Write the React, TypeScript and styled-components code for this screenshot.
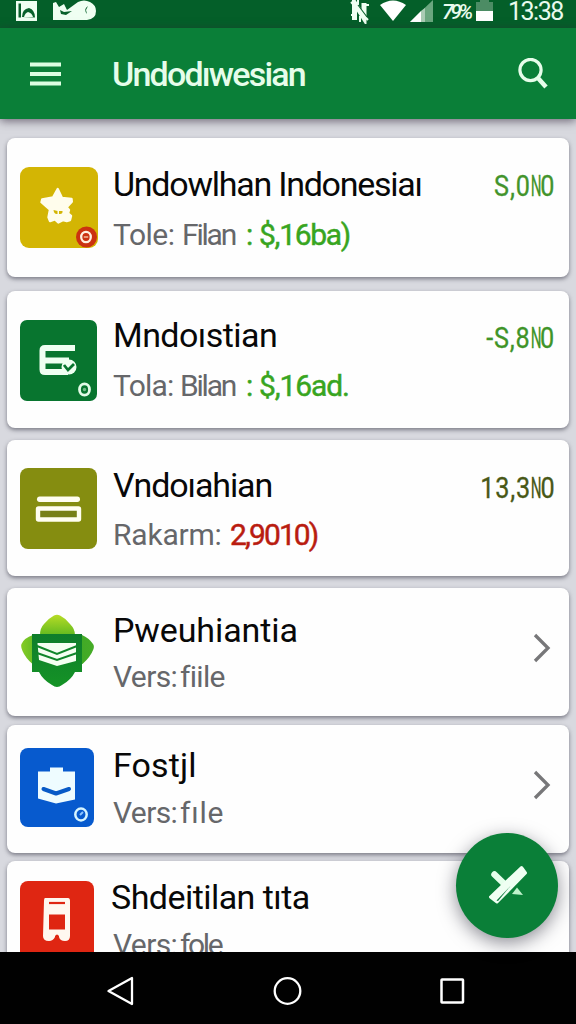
import React from 'react';
import styled, { createGlobalStyle } from 'styled-components';

const GlobalStyle = createGlobalStyle`
  * { box-sizing: border-box; }
  body { margin: 0; font-family: Roboto, 'Liberation Sans', sans-serif; background: #d8d9df; }
  svg { display: block; flex: none; }
`;

const Screen = styled.div`
  position: relative;
  width: 576px;
  height: 1024px;
  display: flex;
  flex-direction: column;
  overflow: hidden;
  background: #d8d9df;
`;

const StatusBar = styled.header`
  height: 28px;
  flex: none;
  display: flex;
  justify-content: space-between;
  background: #045f29;
  color: #e9fbee;
`;

const StatusGroup = styled.div<{ $side: 'left' | 'right' }>`
  display: flex;
  align-items: flex-start;
  padding-left: ${(p) => (p.$side === 'left' ? 16 : 0)}px;
  padding-right: ${(p) => (p.$side === 'right' ? 11 : 0)}px;
`;

const Percent = styled.span`
  font: italic 500 21px/24px Roboto, sans-serif;
  width: 34px;
  letter-spacing: -3.4px;
  white-space: nowrap;
`;

const Clock = styled.span`
  font-size: 25px;
  line-height: 24px;
  width: 57px;
  margin-left: 15px;
  letter-spacing: -1.5px;
  white-space: nowrap;
`;

const AppBar = styled.nav`
  position: relative;
  z-index: 1;
  height: 91px;
  flex: none;
  display: flex;
  align-items: center;
  padding: 0 27px 0 30px;
  background: #0a7f38;
  box-shadow: 0 2px 9px rgba(50, 40, 60, 0.65);
`;

const AppTitle = styled.h1`
  flex: 1;
  margin: 0 0 0 50px;
  font-size: 34px;
  line-height: 40px;
  font-weight: 500;
  letter-spacing: -1.8px;
  color: #e6fdea;
`;

const List = styled.main`
  flex: 1;
  min-height: 0;
  overflow: hidden;
  padding: 19px 7px 0;
`;

const Card = styled.article<{ $h: number; $gap: number }>`
  display: flex;
  height: ${(p) => p.$h}px;
  margin-bottom: ${(p) => p.$gap}px;
  padding: 0 16px 0 13px;
  border-radius: 8px;
  background: #fefefe;
  box-shadow: 0 2px 4px rgba(60, 60, 75, 0.6);
`;

const IconSlot = styled.div<{ $top: number }>`
  width: 93px;
  flex: none;
  padding-top: ${(p) => p.$top}px;
`;

const Copy = styled.div<{ $top: number }>`
  flex: 1;
  min-width: 0;
  padding-top: ${(p) => p.$top}px;
`;

const Title = styled.h2<{ $ls: number; $x: number }>`
  margin: 0 0 0 ${(p) => p.$x}px;
  font-size: 34px;
  line-height: 40px;
  font-weight: 400;
  letter-spacing: ${(p) => p.$ls}px;
  color: #080808;
  white-space: nowrap;
`;

const Detail = styled.p<{ $gap: number }>`
  display: flex;
  margin: ${(p) => p.$gap}px 0 0;
  font-size: 30px;
  line-height: 40px;
  color: #66676a;
  white-space: nowrap;
`;

const Part = styled.span<{ $w: number; $ls: number; $color?: string; $strong?: boolean }>`
  width: ${(p) => p.$w}px;
  letter-spacing: ${(p) => p.$ls}px;
  color: ${(p) => p.$color ?? 'inherit'};
  -webkit-text-stroke: ${(p) => (p.$strong ? 0.45 : 0)}px currentColor;
`;

const Amount = styled.span<{ $top: number; $color: string }>`
  padding-top: ${(p) => p.$top}px;
  margin-right: -2px;
  font-size: 29px;
  line-height: 36px;
  letter-spacing: 0.9px;
  color: ${(p) => p.$color};
  -webkit-text-stroke: 0.3px currentColor;
  white-space: nowrap;
  transform: scaleX(0.87);
  transform-origin: right;
`;

const NarrowGlyph = styled.span`
  display: inline-block;
  width: 11px;
  transform: scaleX(0.6);
  transform-origin: left;
`;

const ChevronSlot = styled.div<{ $top: number }>`
  padding: ${(p) => p.$top}px 2px 0 0;
`;

const NavBar = styled.footer`
  position: relative;
  height: 72px;
  flex: none;
  display: flex;
  align-items: center;
  padding: 6px 111px 0 105px;
  justify-content: space-between;
  background: #010101;
`;

const Fab = styled.button`
  position: absolute;
  left: 456px;
  top: 833px;
  width: 102px;
  height: 105px;
  padding: 0;
  border: 0;
  border-radius: 50%;
  background: #0a7f38;
  box-shadow: 0 5px 18px rgba(30, 30, 45, 0.5);
`;

const Chevron = () => (
  <svg width="18" height="30" viewBox="0 0 18 30" fill="none" stroke="#777779" strokeWidth="3.3">
    <path d="M2 2 15 15 2 28" />
  </svg>
);

const StarIcon = () => (
  <svg width="78" height="81" viewBox="0 0 78 81">
    <rect width="78" height="81" rx="9" fill="#d3b504" />
    <path
      d="M37.7 22 42 31 51.5 32 51.8 34.7 46.7 40.3 49 43 48 46.3 51 49 50 53 46.7 54 43.3 53 38.3 55.5 35 52.3 30 54 28.500 50.3 30 42.6 21.5 35.2 22.2 32.5 33 30.5Z"
      fill="#fffdec"
      stroke="#fffdec"
      strokeWidth="2.4"
      strokeLinejoin="round"
    />
    <path d="M33.5 43q.5 4.500 4 4v-3ZM39 44v3q4 .5 3.500-3Z" fill="#d3b504" />
    <circle cx="66.5" cy="70" r="10.5" fill="#cb3210" />
    <ellipse cx="66" cy="70" rx="4.8" ry="5.2" fill="none" stroke="#fff0df" strokeWidth="2.3" />
    <path d="M63.8 70h4.4" stroke="#f4c2a3" strokeWidth="1.4" />
  </svg>
);

const CardCheckIcon = () => (
  <svg width="77" height="81" viewBox="0 0 77 81">
    <rect width="77" height="81" rx="7" fill="#08752f" />
    <path d="M55 28H25q-2.500 0-2.500 2.500v19q0 2.500 2.500 2.500h23M25 40.500h24" fill="none" stroke="#effff2" strokeWidth="6" />
    <circle cx="49" cy="47" r="7.5" fill="#effff2" />
    <path d="m44 45 4 5 6-6" fill="none" stroke="#08752f" strokeWidth="2.8" />
    <ellipse cx="64.5" cy="69.5" rx="5" ry="5.7" fill="none" stroke="#e3fbe7" strokeWidth="2.8" />
    <circle cx="64.5" cy="69.5" r="1.7" fill="#74b887" />
  </svg>
);

const BarsIcon = () => (
  <svg width="77" height="81" viewBox="0 0 77 81">
    <rect width="77" height="81" rx="8" fill="#858d10" />
    <rect x="17" y="28.5" width="43" height="5.5" rx="2.7" fill="#fffef0" />
    <rect x="18" y="40.5" width="41" height="11" rx=".5" fill="#778016" stroke="#fffef0" strokeWidth="4.4" />
  </svg>
);

const LeafIcon = () => (
  <svg width="74" height="75" viewBox="0 0 74 75">
    <defs>
      <linearGradient id="leafTop" x1="0" x2="0" y1="0" y2="1">
        <stop stopColor="#b7dc26" />
        <stop offset="1" stopColor="#63ba20" />
      </linearGradient>
      <linearGradient id="leafSide" x1="0" x2="1" y1="0" y2="0">
        <stop stopColor="#85cc25" />
        <stop offset=".45" stopColor="#36a324" />
        <stop offset="1" stopColor="#46ac27" />
      </linearGradient>
      <linearGradient id="leafBody" x1="0" x2="0" y1="0" y2="1">
        <stop stopColor="#0e7d2b" />
        <stop offset="1" stopColor="#159326" />
      </linearGradient>
    </defs>
    <path d="M13 21Q4 24 1.500 30q-1 3 1 7 3 7 10 13h50q8-7 11-15 1-3-.5-5Q69 24 62 21Z" fill="url(#leafSide)" />
    <path d="M20 21q0-7 4-11 5-6 10-8.500 3-1.500 6 0 6 3 10 8.500 5 5 5 11Z" fill="url(#leafTop)" />
    <path d="M12 20h50v38h-7q-4 8-13 13-5 4-10 0-9-5-13-13h-7Z" fill="url(#leafBody)" />
    <path d="M17.500 29H56v18l-19 5-18-6Z" fill="#f5fff2" />
    <path d="m17 32 20 8 20-8M17 39l20 7 20-7" fill="none" stroke="#10862a" strokeWidth="2" />
  </svg>
);

const BriefcaseIcon = () => (
  <svg width="74" height="79" viewBox="0 0 74 79">
    <rect width="74" height="79" rx="8" fill="#075ace" />
    <path d="M18 23.5h12v-4h13v4h12v28l-19 4-18-5Z" fill="#eefcff" />
    <path d="m23.5 41 12.500 4.500 13-4.500" fill="none" stroke="#075ac7" strokeWidth="4" strokeLinecap="round" strokeLinejoin="round" />
    <ellipse cx="61" cy="66.5" rx="5.7" ry="6" fill="none" stroke="#d6f5ff" strokeWidth="2.5" />
    <path d="m60 67 3-3" stroke="#8dc5ff" strokeWidth="2" />
  </svg>
);

const TrainIcon = () => (
  <svg width="74" height="79" viewBox="0 0 74 79">
    <rect width="74" height="79" rx="8" fill="#df2612" />
    <path d="M25 17h23q2 0 2 3v35q0 5-5 5-5 0-6-4h-4q-2 4-6 4-6 0-6-5l1-35q0-3 1-3Z" fill="#fff8f0" />
    <path d="M29 22h16" stroke="#df2612" strokeWidth="2.2" />
    <path d="M29 33.5h16v15H29ZM35 60v-5q2-3 4 0v5Z" fill="#df2612" />
  </svg>
);

const green = '#38a51f';

interface Entry {
  icon: React.ReactNode;
  h: number;
  gap: number;
  iconTop: number;
  copyTop: number;
  lineGap: number;
  title: string;
  titleLs: number;
  titleX?: number;
  parts: { t: string; w: number; ls: number; color?: string; strong?: boolean }[];
  amount?: { lead: string; top: number; color: string };
  chevronTop?: number;
}

const entries: Entry[] = [
  {
    icon: <StarIcon />, h: 139, gap: 14, iconTop: 29, copyTop: 26, lineGap: 11,
    title: 'Undowlhan Indonesiaı', titleLs: -1.25,
    parts: [
      { t: 'Tole:', w: 69, ls: -0.5 },
      { t: 'Filan', w: 64, ls: -2.2 },
      { t: ':', w: 13, ls: 0, color: green, strong: true },
      { t: '$,16ba)', w: 95, ls: -1.3, color: green, strong: true },
    ],
    amount: { lead: 'S,0', top: 30, color: '#43942c' },
  },
  {
    icon: <CardCheckIcon />, h: 137, gap: 12, iconTop: 29, copyTop: 24, lineGap: 11,
    title: 'Mndoıstian', titleLs: -0.55,
    parts: [
      { t: 'Tola:', w: 67, ls: -0.8 },
      { t: 'Bilan', w: 66, ls: -2.2 },
      { t: ':', w: 13, ls: 0, color: green, strong: true },
      { t: '$,16ad.', w: 95, ls: -1.1, color: green, strong: true },
    ],
    amount: { lead: '-S,8', top: 29, color: '#3f9428' },
  },
  {
    icon: <BarsIcon />, h: 136, gap: 12, iconTop: 28, copyTop: 25, lineGap: 10,
    title: 'Vndoıahian', titleLs: -1.1,
    parts: [
      { t: 'Rakarm:', w: 117, ls: -0.2 },
      { t: '2,9010)', w: 95, ls: -1.9, color: '#b91c10', strong: true },
    ],
    amount: { lead: '13,3', top: 30, color: '#485816' },
  },
  {
    icon: <LeafIcon />, h: 128, gap: 9, iconTop: 26, copyTop: 22, lineGap: 7,
    title: 'Pweuhiantia', titleLs: -0.1,
    parts: [{ t: 'Vers:', w: 67, ls: -0.6 }, { t: 'fiile', w: 60, ls: -0.7 }],
    chevronTop: 45,
  },
  {
    icon: <BriefcaseIcon />, h: 128, gap: 8, iconTop: 23, copyTop: 20, lineGap: 8,
    title: 'Fostjl', titleLs: 0.1,
    parts: [{ t: 'Vers:', w: 67, ls: -0.6 }, { t: 'fıle', w: 60, ls: 0.8 }],
    chevronTop: 45,
  },
  {
    icon: <TrainIcon />, h: 128, gap: 0, iconTop: 20, copyTop: 16, lineGap: 8,
    title: 'Shdeitilan tıta', titleLs: -0.55, titleX: -2,
    parts: [{ t: 'Vers:', w: 67, ls: -0.6 }, { t: 'fole', w: 60, ls: -2.4 }],
  },
];

export default function App() {
  return (
    <Screen>
      <GlobalStyle />
      <StatusBar>
        <StatusGroup $side="left">
          <svg width="82" height="24" viewBox="0 0 82 24">
            <path d="M0 1h21v20H0Z" fill="#effff2" />
            <path d="M2.500 3.500h2.500v14H2.500ZM6 17q0-8 7-9 6 2 6 9.500Z" fill="#08602b" />
            <path d="M8 17q1-4 4-5 4 1 5 5Z" fill="#effff2" />
            <path d="M37 3 40 2l3 5 5-3 3 6 11-8q6-3 12 0 6 3 6 9 0 8-9 9H37Z" fill="#effff2" />
            <path d="m44 10 4 2 8-1-6 4-5-1ZM72 6q-5 3-1 8l-1-4Z" fill="#08602b" />
          </svg>
        </StatusGroup>
        <StatusGroup $side="right">
          <svg width="92" height="24" viewBox="0 0 92 24">
            <path d="M4.500 20V3L14 18V3" fill="none" stroke="#effff2" strokeWidth="5" />
            <path d="m1 2 17 18M1 15h4M10 16v6M8 0v5M14 5h5" fill="none" stroke="#effff2" strokeWidth="2" />
            <path d="m8 5 9 12" stroke="#08602b" strokeWidth="1.1" />
            <path d="M30 5q13-9 26 0L43 21Z" fill="#fff" />
            <path d="M60 22 83 0v22Z" fill="#6aa77f" />
            <path d="M60 22 71 11v11Z" fill="#fff" />
            <path d="M71 11 75 8v14h-4Z" fill="#a9ccb4" />
          </svg>
          <Percent>79%</Percent>
          <svg width="17" height="24" viewBox="0 0 17 24">
            <path d="M4 0h9v2h4v9H0V2h4Z" fill="#4c8c64" />
            <path d="M0 11h17v10H0Z" fill="#fff" />
          </svg>
          <Clock>13:38</Clock>
        </StatusGroup>
      </StatusBar>
      <AppBar>
        <svg width="32" height="24" viewBox="0 0 32 24" fill="none" stroke="#dcffe2" strokeWidth="4">
          <path d="M0 2.5h31M0 12h31M0 21.5h31" />
        </svg>
        <AppTitle>Undodıwesian</AppTitle>
        <svg width="31" height="32" viewBox="0 0 31 32" fill="none" stroke="#e6fdea">
          <circle cx="12.5" cy="12" r="10.6" strokeWidth="3.2" />
          <path d="m19.5 19.500 8.500 9.5" strokeWidth="4.500" />
        </svg>
      </AppBar>
      <List>
        {entries.map((e) => (
          <Card key={e.title} $h={e.h} $gap={e.gap}>
            <IconSlot $top={e.iconTop}>{e.icon}</IconSlot>
            <Copy $top={e.copyTop}>
              <Title $ls={e.titleLs} $x={e.titleX ?? 0}>{e.title}</Title>
              <Detail $gap={e.lineGap}>
                {e.parts.map((p) => (
                  <Part key={p.t} $w={p.w} $ls={p.ls} $color={p.color} $strong={p.strong}>{p.t}</Part>
                ))}
              </Detail>
            </Copy>
            {e.amount && (
              <Amount $top={e.amount.top} $color={e.amount.color}>
                {e.amount.lead}<NarrowGlyph>N</NarrowGlyph>0
              </Amount>
            )}
            {e.chevronTop && <ChevronSlot $top={e.chevronTop}><Chevron /></ChevronSlot>}
          </Card>
        ))}
      </List>
      <NavBar>
        <svg width="30" height="30" viewBox="0 0 30 30" fill="none" stroke="#fff" strokeWidth="2.3">
          <path d="M27 2v26L3.5 15Z" strokeLinejoin="round" />
        </svg>
        <svg width="30" height="30" viewBox="0 0 30 30" fill="none" stroke="#fff" strokeWidth="2.3">
          <circle cx="14.500" cy="15" r="12.800" />
        </svg>
        <svg width="25" height="26" viewBox="0 0 25 26" fill="none" stroke="#fff" strokeWidth="2.5">
          <rect x="1.5" y="1.5" width="21.5" height="23" rx=".5" />
        </svg>
      </NavBar>
      <Fab aria-label="Edit">
        <svg width="102" height="105" viewBox="0 0 102 105">
          <path d="m56 61 5-6.500 6 7.500Z" fill="#bff2cb" />
          <path d="m38.500 41.500 12 11.500" stroke="#e5ffeb" strokeWidth="6.500" strokeLinecap="round" />
          <path d="M34.500 64 65.500 34.500 69.500 40 41 69Z" fill="#effff2" stroke="#effff2" strokeWidth="3" strokeLinejoin="round" />
          <path d="m40.500 67.500 14-14.500-12.500 15Z" fill="#09763a" />
        </svg>
      </Fab>
    </Screen>
  );
}
